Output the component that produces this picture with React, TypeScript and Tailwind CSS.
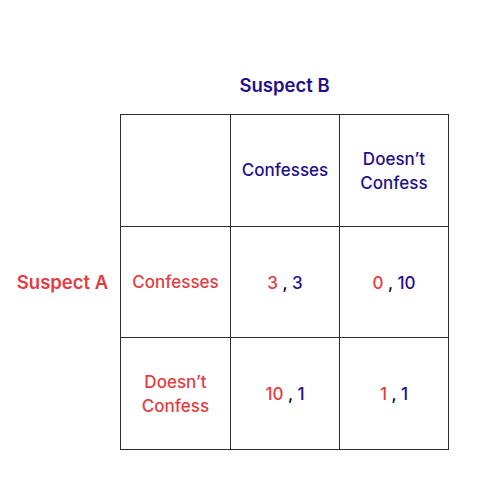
import React from "react";

const R = "text-[#e33d42]";
const B = "text-[#1f0f8e]";

function Pay({ a, b }: { a: string; b: string }) {
  return (
    <span className="text-[17px] font-[550] pt-[3px]">
      <span className={R}>{a}</span>
      <span className="text-black"> , </span>
      <span className={B}>{b}</span>
    </span>
  );
}

export default function App() {
  const cell = "border-r border-b border-[#2d2d2d] flex items-center justify-center text-center";
  return (
    <div
      className="w-[500px] h-[500px] bg-white"
      style={{ fontFamily: "Inter, 'Noto Sans', sans-serif" }}
    >
      <div className="pt-[72px] grid grid-cols-[120px_329px]">
        <div />
        <div className={`h-[42px] text-center text-[18.5px] leading-[26px] font-semibold ${B}`}>
          Suspect B
        </div>
        <div className="grid grid-rows-[113px_111px_112px]">
          <div />
          <div className={`flex items-center justify-center pl-[5px] pt-[1px] text-[18.5px] font-semibold ${R}`}>
            Suspect A
          </div>
          <div />
        </div>
        <div className="grid grid-cols-[110px_109px_109px] grid-rows-[112px_111px_112px] border-l border-t border-[#2d2d2d] w-[329px]">
          <div className={cell} />
          <div className={`${cell} text-[17px] font-[550] ${B}`}>Confesses</div>
          <div className={`${cell} text-[17px] leading-[24px] font-[550] ${B}`}>
            Doesn’t
            <br />
            Confess
          </div>
          <div className={`${cell} pt-[2px] text-[17px] font-[550] ${R}`}>Confesses</div>
          <div className={cell}>
            <Pay a="3" b="3" />
          </div>
          <div className={cell}>
            <Pay a="0" b="10" />
          </div>
          <div className={`${cell} text-[17px] leading-[24px] font-[550] ${R}`}>
            Doesn’t
            <br />
            Confess
          </div>
          <div className={cell}>
            <Pay a="10" b="1" />
          </div>
          <div className={cell}>
            <Pay a="1" b="1" />
          </div>
        </div>
      </div>
    </div>
  );
}
